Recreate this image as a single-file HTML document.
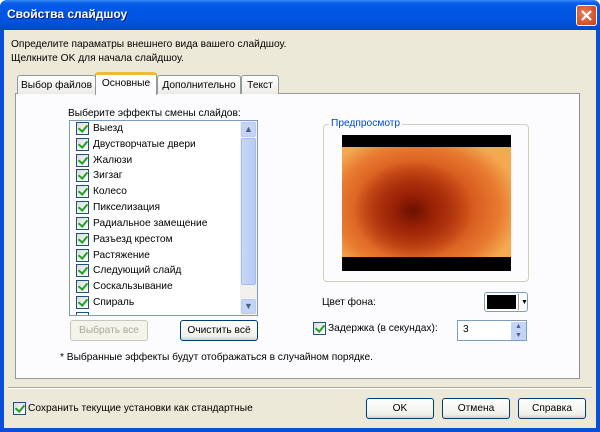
<!DOCTYPE html><html><head><meta charset="utf-8"><style>
*{box-sizing:border-box}
body{margin:0;width:600px;height:432px;overflow:hidden;font-family:"Liberation Sans","DejaVu Sans",sans-serif;font-size:10.2px;color:#000}
.a{position:absolute;white-space:nowrap}
#win{position:absolute;left:0;top:0;width:600px;height:432px;background:#0a4fd8;border-radius:7px 7px 0 0}
#title{position:absolute;left:0;top:0;width:600px;height:30px;border-radius:7px 7px 0 0;background:linear-gradient(#3a8cf8 0,#0a5ee8 3px,#0058e6 8px,#0054e0 20px,#0048c8 29px)}
#body{position:absolute;left:4px;top:30px;width:592px;height:398px;background:#ece9d8}
.tab{position:absolute;top:75px;height:19px;background:linear-gradient(#fff,#ecebe6);border:1px solid #919b9c;border-bottom:none;border-radius:3px 3px 0 0;padding:4px 0 0;text-align:center;white-space:nowrap}
.btn{position:absolute;height:21px;border:1px solid #003c74;border-radius:3px;background:linear-gradient(#fff,#f0f0ea 80%,#d6d0c5);text-align:center;line-height:19px}
.cb{position:absolute;width:13px;height:13px;border:1px solid #1c5180;background:linear-gradient(135deg,#dcdcd7,#fff)}
.cb:after{content:"";position:absolute;left:3px;top:0px;width:4px;height:7px;border:solid #21a121;border-width:0 2px 2px 0;transform:rotate(40deg)}
.row{position:absolute;left:76px;height:15px}
.row span{position:absolute;left:17px;top:1px;white-space:nowrap}
</style></head><body>
<div id="win"></div>
<div id="title"></div>
<div class="a" style="left:7px;top:7px;color:#fff;font-weight:bold;font-size:12px;text-shadow:1px 1px #0a1e80">Свойства слайдшоу</div>
<div class="a" style="left:576px;top:5px;width:21px;height:21px;border:1px solid #fff;border-radius:3px;background:radial-gradient(circle at 40% 40%,#e88060,#c83c10)"></div>
<svg class="a" style="left:576px;top:5px" width="21" height="21"><path d="M6 6L15 15M15 6L6 15" stroke="#fff" stroke-width="2.2"/></svg>
<div id="body"></div>
<div class="a" style="left:11px;top:38px;line-height:14px">Определите параматры внешнего вида вашего слайдшоу.<br>Щелкните OK для начала слайдшоу.</div>
<div class="a" style="left:15px;top:93px;width:565px;height:286px;background:#fcfcfe;border:1px solid #919b9c;border-right-color:#8a9092"></div>
<div class="tab" style="left:17px;width:79px">Выбор файлов</div>
<div class="tab" style="left:157px;width:84px">Дополнительно</div>
<div class="tab" style="left:241px;width:38px">Текст</div>
<div class="tab" style="left:95px;top:72px;height:23px;width:62px;background:#fcfcfe;border-top:3px solid #f5b640;padding-top:3px">Основные</div>
<div class="a" style="left:68px;top:108px">Выберите эффекты смены слайдов:</div>
<div class="a" style="left:69px;top:120px;width:189px;height:196px;background:#fff;border:1px solid #7f9db9;overflow:hidden"></div>
<div class="a" style="left:240px;top:121px;width:17px;height:194px;background:#f3f1ec"></div>
<div class="a" style="left:241px;top:122px;width:15px;height:15px;background:#c4d4f6;border:1px solid #b8cbf2;border-radius:2px;color:#4d6185;text-align:center;font-size:9px;line-height:13px">▲</div>
<div class="a" style="left:241px;top:138px;width:15px;height:147px;background:linear-gradient(90deg,#c8d6f8,#b7cbf6);border:1px solid #a8bcea;border-radius:2px"></div>
<div class="a" style="left:241px;top:299px;width:15px;height:15px;background:#c4d4f6;border:1px solid #b8cbf2;border-radius:2px;color:#4d6185;text-align:center;font-size:9px;line-height:13px">▼</div>
<div class="row" style="top:122px"><i class="cb"></i><span>Выезд</span></div>
<div class="row" style="top:138px"><i class="cb"></i><span>Двустворчатые двери</span></div>
<div class="row" style="top:154px"><i class="cb"></i><span>Жалюзи</span></div>
<div class="row" style="top:169px"><i class="cb"></i><span>Зигзаг</span></div>
<div class="row" style="top:185px"><i class="cb"></i><span>Колесо</span></div>
<div class="row" style="top:201px"><i class="cb"></i><span>Пикселизация</span></div>
<div class="row" style="top:217px"><i class="cb"></i><span>Радиальное замещение</span></div>
<div class="row" style="top:233px"><i class="cb"></i><span>Разъезд крестом</span></div>
<div class="row" style="top:249px"><i class="cb"></i><span>Растяжение</span></div>
<div class="row" style="top:264px"><i class="cb"></i><span>Следующий слайд</span></div>
<div class="row" style="top:280px"><i class="cb"></i><span>Соскальзывание</span></div>
<div class="row" style="top:296px"><i class="cb"></i><span>Спираль</span></div>
<div class="a" style="left:76px;top:312px;width:13px;height:3px;border:1px solid #1c5180;border-bottom:none"></div>
<div class="btn" style="left:70px;top:320px;width:78px;border-color:#c9c7ba;background:#f5f4ea;color:#aca899">Выбрать все</div>
<div class="btn" style="left:180px;top:320px;width:78px">Очистить всё</div>
<div class="a" style="left:323px;top:124px;width:206px;height:158px;border:1px solid #d0d0bf;border-radius:4px"></div>
<div class="a" style="left:329px;top:118px;background:#fcfcfe;color:#0046d5;padding:0 2px">Предпросмотр</div>
<div class="a" style="left:342px;top:135px;width:169px;height:136px;background:#000"></div>
<div class="a" style="left:342px;top:147px;width:169px;height:110px;background:radial-gradient(ellipse 35% 45% at 42% 58%,#6a1000 0,#9a2206 35%,transparent 100%),radial-gradient(ellipse 60% 70% at 45% 55%,#b8380c 0,#d4561c 50%,#e87a30 80%,#f4a850 100%)"></div>
<div class="a" style="left:322px;top:297px">Цвет фона:</div>
<div class="a" style="left:484px;top:292px;width:44px;height:20px;border:1px solid #7f9db9;border-radius:3px;background:#fff"></div>
<div class="a" style="left:487px;top:295px;width:29px;height:14px;background:#000"></div>
<div class="a" style="left:518px;top:294px;width:1px;height:16px;background:#999"></div>
<div class="a" style="left:521px;top:299px;font-size:7px">▼</div>
<i class="cb" style="left:313px;top:322px"></i>
<div class="a" style="left:328px;top:323px">Задержка (в секундах):</div>
<div class="a" style="left:457px;top:320px;width:70px;height:21px;border:1px solid #7f9db9;background:#fff"></div>
<div class="a" style="left:463px;top:324px">3</div>
<div class="a" style="left:511px;top:322px;width:15px;height:9px;background:#c4d4f6;color:#4d6185;font-size:7px;text-align:center;line-height:9px">▲</div>
<div class="a" style="left:511px;top:331px;width:15px;height:9px;background:#c4d4f6;color:#4d6185;font-size:7px;text-align:center;line-height:9px">▼</div>
<div class="a" style="left:60px;top:352px">* Выбранные эффекты будут отображаться в случайном порядке.</div>
<div class="a" style="left:8px;top:387px;width:584px;height:2px;border-top:1px solid #aca899;border-bottom:1px solid #fff"></div>
<i class="cb" style="left:13px;top:402px"></i>
<div class="a" style="left:28px;top:403px">Сохранить текущие установки как стандартные</div>
<div class="btn" style="left:366px;top:398px;width:68px">OK</div>
<div class="btn" style="left:442px;top:398px;width:68px">Отмена</div>
<div class="btn" style="left:518px;top:398px;width:68px">Справка</div>
</body></html>
